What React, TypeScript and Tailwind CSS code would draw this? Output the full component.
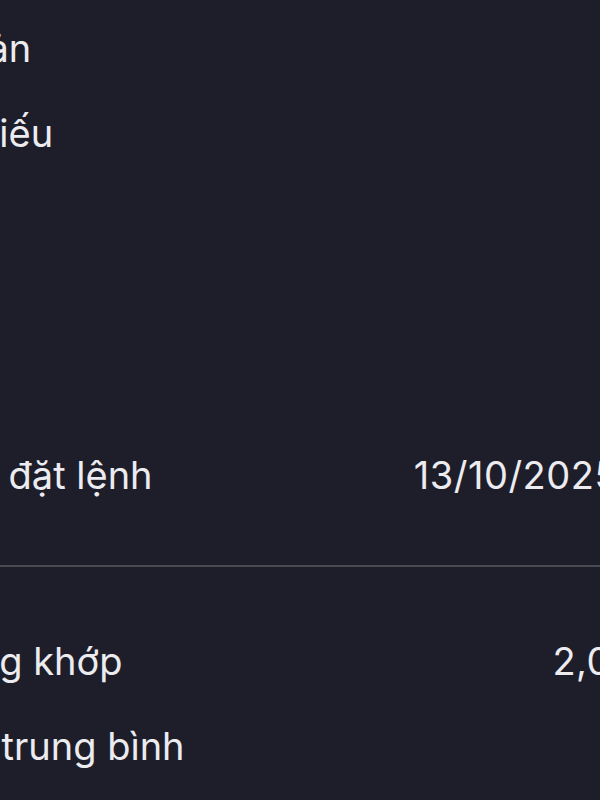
const topRows = [
  { label: 'Tiểu khoản', value: '' },
  { label: 'Mã cổ phiếu', value: '' },
  { label: 'Lệnh', value: '' },
  { label: 'Giá đặt', value: '' },
  { label: 'Loại lệnh', value: '' },
]

const matchRows = [
  { label: 'Khối lượng khớp', value: '2,000' },
  { label: 'Giá khớp trung bình', value: '' },
]

function Row({ label, value }: { label: string; value: string }) {
  return (
    <div className="flex h-[85px] items-center justify-between">
      <span className="whitespace-nowrap">{label}</span>
      <span className="whitespace-nowrap tracking-[0.5px]">{value}</span>
    </div>
  )
}

export default function App() {
  return (
    <div className="h-[800px] w-[600px] overflow-hidden bg-[#1e1e2a] font-['Inter',sans-serif] text-[38px] text-[#ececf0]">
      <div className="-ml-[168px] w-[828px] pt-[6px]">
        {topRows.map((row) => (
          <Row key={row.label} label={row.label} value={row.value} />
        ))}
        <div className="flex h-[85px] items-center justify-between pt-[3px]">
          <span className="whitespace-nowrap">Thời gian đặt lệnh</span>
          <span className="mr-[42px] whitespace-nowrap tracking-[0.5px]">13/10/2025</span>
        </div>
        <div className="mt-[49px] h-[2px] bg-[#4a4a53]" />
        <div className="pt-[52px]">
          {matchRows.map((row) => (
            <Row key={row.label} label={row.label} value={row.value} />
          ))}
        </div>
      </div>
    </div>
  )
}
